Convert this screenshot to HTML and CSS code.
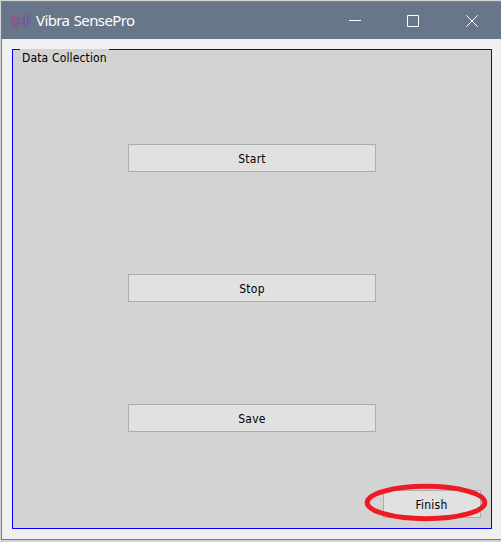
FILE: index.html
```html
<!DOCTYPE html>
<html lang="en">
<head>
<meta charset="utf-8">
<title>Vibra SensePro</title>
<link rel="stylesheet" href="styles.css">
</head>
<body>
<main class="window">
  <header class="titlebar">
    <svg class="logo" width="20" height="16" viewBox="0 0 20 16" fill="none">
      <defs><linearGradient id="wave" gradientUnits="userSpaceOnUse" x1="0" y1="0" x2="20" y2="10"><stop stop-color="#b63f85"/><stop offset=".5" stop-color="#854d96"/><stop offset="1" stop-color="#674fba"/></linearGradient></defs>
      <g stroke="url(#wave)" stroke-width=".9">
        <ellipse cx="2" cy="8" rx="1.3" ry="4.8"/>
        <ellipse cx="4.9" cy="8" rx="1.6" ry="6.8"/>
        <path d="M7 4.5Q8.3 8 7 11.5"/>
        <rect x="8" y="5.5" width="4" height="5" rx="1.2"/>
        <path d="M13 4.5Q11.7 8 13 11.5"/>
        <ellipse cx="15.1" cy="8" rx="1.6" ry="6.8"/>
        <ellipse cx="18" cy="8" rx="1.3" ry="4.8"/>
      </g>
    </svg>
    <h1 class="title">Vibra SensePro</h1>
    <nav class="controls">
      <svg width="12" height="12" viewBox="0 0 12 12"><path d="M0 5.5H12"/></svg>
      <svg width="12" height="12" viewBox="0 0 12 12"><path d="M.5 .5H11.5V11.5H.5Z"/></svg>
      <svg class="close" width="12" height="12" viewBox="0 0 12 12"><path d="M.3 .3L11.7 11.7M11.7 .3L.3 11.7"/></svg>
    </nav>
  </header>
  <section class="panel">
    <h2 class="legend">Data Collection</h2>
    <div class="actions">
      <button class="button">Start</button>
      <button class="button">Stop</button>
      <button class="button">Save</button>
    </div>
    <div class="footer">
      <button class="button finish">Finish</button>
      <svg class="ring" width="124" height="40" viewBox="0 0 124 40"><ellipse cx="62" cy="19.5" rx="58.8" ry="16.2"/></svg>
    </div>
  </section>
</main>
</body>
</html>
```
FILE: styles.css
```css
* { box-sizing: border-box; }
body {
  margin: 0;
  padding: 1px 0 2px 1px;
  height: 542px;
  overflow: hidden;
  background: #d3d5d2;
  font-family: "DejaVu Sans Condensed", "DejaVu Sans", sans-serif;
}
.window {
  height: 539px;
  display: flex;
  flex-direction: column;
  background: #f0f0f0;
  border: 1px solid #6f7b8b;
  border-top-color: #7b8285;
  border-right: 0;
}
.titlebar {
  height: 37px;
  flex: none;
  display: flex;
  align-items: center;
  padding: 0 23px 0 9px;
  background: #687689;
}
.title {
  margin: 0 0 2px 5px;
  font: 400 15px/20px "Noto Sans", "Open Sans", sans-serif;
  letter-spacing: -.6px;
  word-spacing: 1px;
  color: #fff;
  white-space: nowrap;
}
.controls {
  display: flex;
  gap: 46px;
  margin-left: auto;
}
.controls svg {
  fill: none;
  stroke: #fff;
  stroke-width: 1;
}
.controls .close { margin-left: 1px; }
.panel {
  flex: none;
  width: 480px;
  height: 480px;
  margin: 10px 0 0 10px;
  border: 1px solid #00f;
  background: #d3d3d3;
}
.legend {
  width: 89px;
  height: 16px;
  margin: -1px 0 0 7px;
  padding-left: 2px;
  background: #d3d3d3;
  color: #000;
  font-size: 12px;
  font-weight: 400;
  letter-spacing: .15px;
  line-height: 19px;
  white-space: nowrap;
}
.actions {
  display: flex;
  flex-direction: column;
  gap: 102px;
  margin: 79px 115px 58px;
}
.button {
  display: block;
  width: 100%;
  height: 28px;
  padding: 1px 0 0;
  border: 1px solid #adadad;
  background: #e1e1e1;
  color: #000;
  font: 12px/16px "DejaVu Sans Condensed", "DejaVu Sans", sans-serif;
  letter-spacing: .25px;
}
.footer {
  position: relative;
  width: 98px;
  margin-left: 370px;
}
.finish { padding-right: 1px; }
.ring {
  position: absolute;
  left: -19px;
  top: -7px;
  fill: none;
  stroke: #ed1c24;
  stroke-width: 5;
}
```
